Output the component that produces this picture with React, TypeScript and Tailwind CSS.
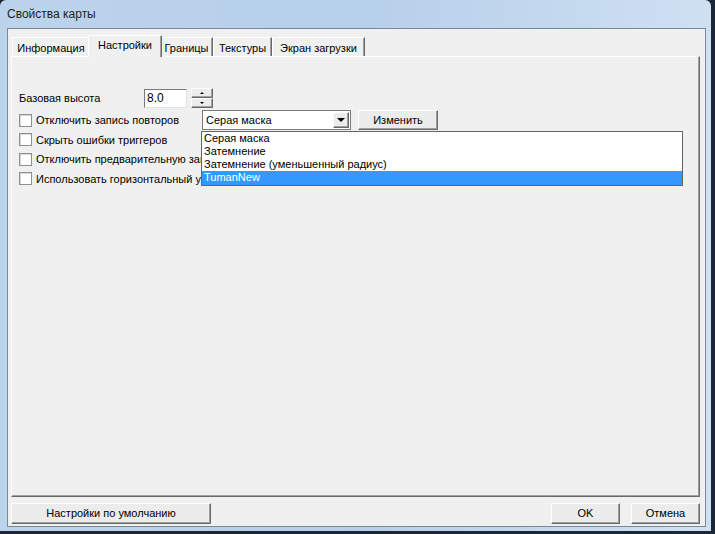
import React from "react";

const raised =
  "border border-t-white border-l-white border-r-[#696969] border-b-[#696969] shadow-[inset_-1px_-1px_0_#a0a0a0]";

function Checkbox({ label }: { label: string }) {
  return (
    <div className="flex items-center h-[19.5px] w-[190px] overflow-hidden">
      <span className="w-[13px] h-[13px] border border-[#8e8f8f] bg-white shadow-[inset_1px_1px_0_#d8d8d8] shrink-0" />
      <span className="ml-[4px] whitespace-nowrap">{label}</span>
    </div>
  );
}

function Button({ children, className }: { children: React.ReactNode; className?: string }) {
  return (
    <div className={`flex items-center justify-center bg-[#ececec] ${raised} ${className ?? ""}`}>
      {children}
    </div>
  );
}

const tabs = ["Информация", "Настройки", "Границы", "Текстуры", "Экран загрузки"];
const tabWidths = [78, 70, 53, 59, 93];

export default function App() {
  return (
    <div
      className="w-[715px] h-[534px] bg-[#1b2736] overflow-hidden text-[11px] text-black"
      style={{ fontFamily: '"Liberation Sans", Arial, sans-serif' }}
    >
      <div className="w-[711px] h-[531px] rounded-t-[6px] bg-gradient-to-r from-[#bcd3ec] via-[#b6cfea] to-[#cfe0f2] flex flex-col px-[7px] pr-[5px] pb-[4px]">
        {/* title bar */}
        <div className="h-[28px] flex items-center text-[12px] text-[#1e1e1e] shrink-0">
          Свойства карты
        </div>

        {/* client area */}
        <div className="flex-1 bg-[#f0f0f0] border border-[#7b8896] flex flex-col pl-[3px] pr-[5px] pt-[5px]">
          {/* tab strip */}
          <div className="flex items-end h-[22px] pl-[1px]">
            {tabs.map((t, i) => {
              const sel = i === 1;
              return (
                <div
                  key={t}
                  className={`flex items-center justify-center border border-b-0 border-t-white border-l-white border-r-[#696969] bg-[#f0f0f0] shadow-[inset_-1px_0_0_#a0a0a0] ${
                    sel ? "h-[22px] -mb-[1px] relative z-10 pb-[3px] -mx-[2px]" : "h-[19px] pt-[2px]"
                  }`}
                  style={{ width: sel ? tabWidths[i] + 4 : tabWidths[i] }}
                >
                  {t}
                </div>
              );
            })}
          </div>

          {/* tab panel */}
          <div className="relative h-[441px] border border-t-white border-l-white border-r-[#696969] border-b-[#696969] shadow-[inset_-1px_-1px_0_#a0a0a0] pl-[7px] pt-[31px]">
            <div className="flex items-center h-[20px]">
              <span className="w-[125px]">Базовая высота</span>
              <div className="w-[43px] h-[19px] bg-white border border-t-[#7a7a7a] border-l-[#7a7a7a] border-r-[#e3e3e3] border-b-[#e3e3e3] flex items-center pl-[2px] text-[12px]">
                8.0
              </div>
              <div className="ml-[4px] flex flex-col w-[22px] h-[20px]">
                <div className={`flex-1 flex items-center justify-center bg-[#ececec] ${raised}`}>
                  <span className="block w-0 h-0 border-x-[2px] border-x-transparent border-b-[2px] border-b-black" />
                </div>
                <div className={`flex-1 flex items-center justify-center bg-[#ececec] ${raised}`}>
                  <span className="block w-0 h-0 border-x-[2px] border-x-transparent border-t-[2px] border-t-black" />
                </div>
              </div>
            </div>

            <div className="mt-[2px] flex flex-col">
              <div className="flex items-center">
                <div className="w-[183px]">
                  <Checkbox label="Отключить запись повторов" />
                </div>
                <div className="w-[149px] h-[20px] bg-white border border-[#7a7a7a] flex items-center justify-between pl-[3px] pr-[1px]">
                  <span>Серая маска</span>
                  <div className={`w-[16px] h-[16px] bg-[#ececec] flex items-center justify-center ${raised}`}>
                    <span className="block w-0 h-0 border-x-[4px] border-x-transparent border-t-[4px] border-t-black" />
                  </div>
                </div>
                <Button className="ml-[7px] w-[80px] h-[20px]">Изменить</Button>
              </div>
              <Checkbox label="Скрыть ошибки триггеров" />
              <Checkbox label="Отключить предварительную загрузку" />
              <Checkbox label="Использовать горизонтальный уровень" />
            </div>

            {/* open dropdown list */}
            <div className="absolute left-[189px] top-[74px] w-[482px] h-[55px] bg-white border border-[#646464] flex flex-col leading-[13px]">
              <div className="pl-[2px]">Серая маска</div>
              <div className="pl-[2px]">Затемнение</div>
              <div className="pl-[2px]">Затемнение (уменьшенный радиус)</div>
              <div className="pl-[2px] bg-[#3399ff] text-white h-[14px]">TumanNew</div>
            </div>
          </div>

          {/* bottom buttons */}
          <div className="flex items-center mt-[6px] h-[21px]">
            <Button className="w-[200px] h-[21px]">Настройки по умолчанию</Button>
            <div className="flex-1" />
            <Button className="w-[69px] h-[21px]">OK</Button>
            <Button className="ml-[11px] w-[69px] h-[21px]">Отмена</Button>
          </div>
        </div>
      </div>
    </div>
  );
}
